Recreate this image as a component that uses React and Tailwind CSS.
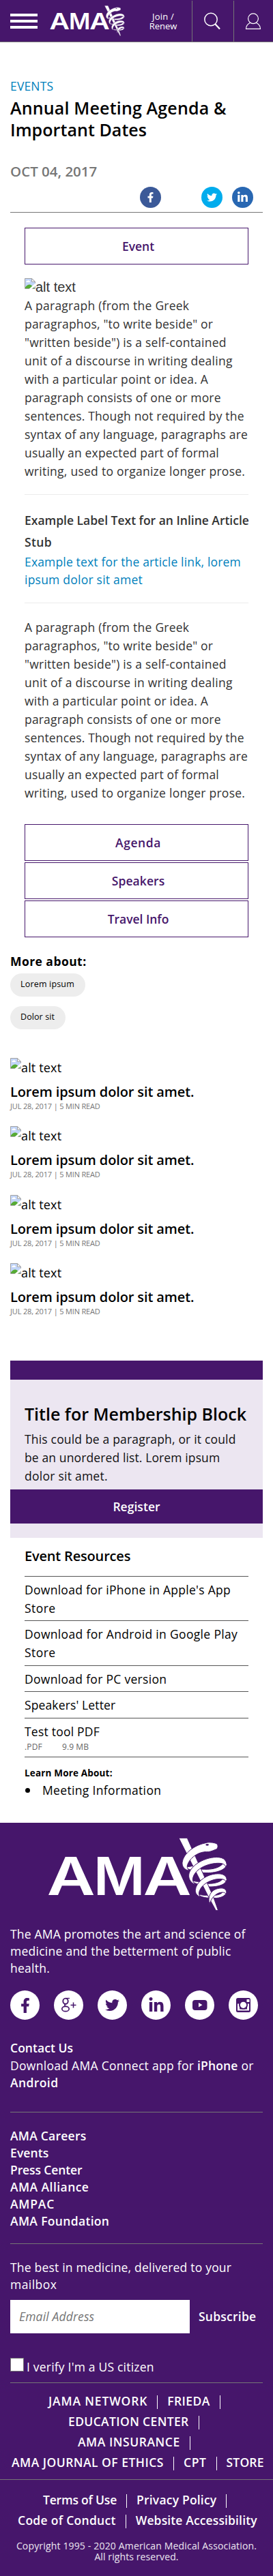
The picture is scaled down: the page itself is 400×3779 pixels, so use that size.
import { FaFacebookF, FaTwitter, FaLinkedinIn } from "react-icons/fa";

function AmaLogo({ className }) {
  return (
    <svg className={className} viewBox="210 78 790 324" fill="#fff">
      <g fontFamily="Inter, sans-serif" fontWeight="600" fontSize="233">
        <text x="206" y="329" textLength="212" lengthAdjust="spacingAndGlyphs">A</text>
        <text x="411" y="329" textLength="226" lengthAdjust="spacingAndGlyphs">M</text>
        <text x="629" y="329" textLength="212" lengthAdjust="spacingAndGlyphs">A</text>
      </g>
      <g stroke="#46166b" strokeWidth="3">
        <path d="M812 204 C825 207 838 205 850 201 L858 220 C840 222 820 216 812 204Z" />
        <path d="M997 196 C992 222 940 238 886 231 L882 216 C925 220 962 213 980 192Z" />
        <path d="M838 262 C855 272 870 272 884 270 L890 284 C865 284 845 275 838 262Z" />
        <path d="M997 262 C992 287 950 297 908 293 L902 279 C935 282 968 275 978 260Z" />
        <path d="M868 325 C885 332 905 332 922 330 L926 343 C900 343 878 338 868 325Z" />
        <path d="M996 318 C990 338 960 347 930 343 L938 331 C955 332 972 327 980 316Z" />
        <path d="M786 79 L823 79 L938 338 L959 398 L949 398 L918 341Z" />
        <path d="M954 105 C940 98 915 96 900 102 C858 110 806 145 801 188 C800 205 812 220 832 223 C822 212 822 205 824 198 C832 172 862 144 900 140 C925 142 938 133 952 128 C959 122 959 112 954 105Z" />
        <path d="M997 196 C994 163 960 160 928 166 C885 174 833 205 830 243 C829 262 842 279 858 283 C846 270 846 262 848 254 C856 224 890 200 935 192 C968 187 990 190 993 209Z" />
        <path d="M997 262 C994 236 965 233 935 239 C900 246 862 275 859 308 C858 322 866 333 880 338 C872 326 874 318 877 312 C886 286 915 268 948 261 C974 257 990 260 993 272Z" />
        <path d="M996 318 C994 298 972 296 950 304 C925 312 912 340 921 371 C926 350 940 330 962 321 C980 316 990 318 993 326Z" />
      </g>
      <ellipse cx="911" cy="109" rx="7" ry="4" fill="#46166b" />
    </svg>
  );
}

function BrokenImage() {
  return (
    <svg className="h-4 w-4 shrink-0" viewBox="0 0 16 16">
      <path d="M.5 .5H11L15.5 5V15.5H.5Z" fill="#c2d5f8" />
      <path d="M2.5 6a1.6 1.6 0 0 1 1.5-2 2 2 0 0 1 3.500 .5A1.200 1.200 0 0 1 8 6Z" fill="#fff" />
      <path d="M1 15V13.500C4 9 8 8.500 10.500 11L15 15Z" fill="#56ab34" />
      <path d="M.5 15.500V.5H10.500L15.500 5.200V15.500Z" fill="none" stroke="#a3a3a3" />
      <path d="M10.500 .8V5.300H15.200Z" fill="#fff" stroke="#a3a3a3" />
      <path d="M16 7.200L6.500 16H10.500L16 11.500Z" fill="#fff" />
    </svg>
  );
}

function Lines({ rows }) {
  return rows.map(([text, tracking], i) => (
    <span key={i} className={`block whitespace-nowrap ${tracking}`}>{text}</span>
  ));
}

const greek = [
  ["A paragraph (from the Greek", "tracking-[0.24px]"],
  ['paragraphos, "to write beside" or', "tracking-[0.18px]"],
  ['"written beside") is a self-contained', "tracking-[0.23px]"],
  ["unit of a discourse in writing dealing", "tracking-[0.27px]"],
  ["with a particular point or idea. A", "tracking-[0.23px]"],
  ["paragraph consists of one or more", "tracking-[0.17px]"],
  ["sentences. Though not required by the", "tracking-[0.16px]"],
  ["syntax of any language, paragraphs are", "tracking-[0.18px]"],
  ["usually an expected part of formal", "tracking-[0.17px]"],
  ["writing, used to organize longer prose.", "tracking-[0.26px]"],
];

function OutlineButton({ children, tracking }) {
  return (
    <button className={`block h-[54px] w-full border border-[#46166b] bg-white pl-[5px] text-center font-semibold text-[#46166b] ${tracking}`}>
      <span className="block h-[52px] leading-[53px]">{children}</span>
    </button>
  );
}

function Article() {
  return (
    <article className="h-[100.33px]">
      <div className="flex h-7 items-start">
        <BrokenImage />
        <span className="text-[18px] leading-7 tracking-[0.16px]">alt text</span>
      </div>
      <h3 className="mt-[9px] text-[20px] leading-[26px] font-semibold tracking-[-0.12px]">Lorem ipsum dolor sit amet.</h3>
      <p className="text-[11px] leading-[15px] tracking-[-0.17px] text-[#767676]">JUL 28, 2017 | 5 MIN READ</p>
    </article>
  );
}

const Bar = () => <span className="mx-[14px] mt-[7px] h-5 w-px shrink-0 bg-white" />;

function LinkRow({ items, className, trailing }) {
  return (
    <div className={`flex h-[30px] leading-[30px] font-semibold whitespace-nowrap ${className}`}>
      {items.map(([label, cls], i) => (
        <span key={label} className="flex">
          <a className={cls}>{label}</a>
          {(i < items.length - 1 || trailing) && <Bar />}
        </span>
      ))}
    </div>
  );
}

function Social({ children }) {
  return <a className="flex h-[43px] w-[43px] items-center justify-center rounded-full bg-white text-[#46166b]">{children}</a>;
}

const careers = [
  ["AMA Careers", "tracking-[0.24px]"],
  ["Events", "tracking-[0.12px]"],
  ["Press Center", "tracking-[-0.12px]"],
  ["AMA Alliance", "tracking-[0.44px]"],
  ["AMPAC", "tracking-[0.78px]"],
  ["AMA Foundation", "tracking-[0.33px]"],
];

export default function App() {
  return (
    <div className="w-[400px] overflow-hidden bg-white font-['Open_Sans',sans-serif] text-[17.5px] text-black">
      <header className="flex h-[62px] border-b border-[#757575] bg-[#46166b] text-white">
        <div className="mt-5 ml-[15px] flex w-10 flex-col gap-[5px]">
          <span className="h-1 bg-white" />
          <span className="h-1 bg-white" />
          <span className="h-1 bg-white" />
        </div>
        <AmaLogo className="mt-2 ml-[18px] h-[45px] w-[110px]" />
        <a className="mt-[17px] ml-[29px] block w-[54px] text-center text-[13px] leading-[14px]">
          <span className="block tracking-[0.2px]">Join /</span>
          <span className="block">Renew</span>
        </a>
        <div className="mt-px ml-[15px] w-[61px] border-l border-[#757575]">
          <svg className="h-[60px] w-[60px]" viewBox="282 1 60 60" fill="none" stroke="#fff">
            <circle cx="309" cy="28.500" r="9.200" strokeWidth="1.500" />
            <path d="M315.500 35.500L322 42.500" strokeWidth="2.200" />
          </svg>
        </div>
        <div className="mt-px w-[58px] border-l border-[#757575]">
          <svg className="h-[60px] w-[57px]" viewBox="343 1 57 60" fill="none" stroke="#fff" strokeWidth="1.200">
            <circle cx="371" cy="27.300" r="7.400" />
            <path d="M366.500 33.500C362.500 35.500 360.500 39 360.500 42.400H381.500C381.500 39 379.500 35.500 375.500 33.500" />
          </svg>
        </div>
      </header>

      <main>
        <div className="px-[15px]">
          <p className="mt-[52px] leading-6 tracking-[0.16px] text-[#007fbc]">EVENTS</p>
          <h1 className="mt-1 text-[25px] leading-8 font-semibold">
            <Lines rows={[["Annual Meeting Agenda &", "tracking-[0.17px]"], ["Important Dates", "tracking-[0.07px]"]]} />
          </h1>
          <p className="mt-[31px] text-[20.5px] leading-7 font-semibold text-[#767676]">OCT 04, 2017</p>
          <div className="mt-[9px] flex h-[31px] justify-end pr-[14px] text-white">
            <a className="flex h-[31px] w-[31px] items-center justify-center rounded-full bg-[#3b5998]"><FaFacebookF size={15} /></a>
            <a className="ml-[59px] flex h-[31px] w-[31px] items-center justify-center rounded-full bg-[#00aced]"><FaTwitter size={15} /></a>
            <a className="ml-[14px] flex h-[31px] w-[31px] items-center justify-center rounded-full bg-[#2867b2]"><FaLinkedinIn size={17} /></a>
          </div>
          <div className="mt-[6px] h-px bg-[#757575]" />
        </div>

        <div className="px-9 text-[#333]">
          <div className="pt-[22px]"><OutlineButton tracking="tracking-normal">Event</OutlineButton></div>
          <div className="mt-5 flex h-[27px] items-start font-['Liberation_Sans',sans-serif] text-[20px] leading-[26px]">
            <BrokenImage />
            <span>alt text</span>
          </div>
          <p className="leading-[27px]"><Lines rows={greek} /></p>
          <div className="mt-5 h-px bg-[#ebebeb]" />
          <h4 className="mt-[21px] leading-8 font-semibold">
            <Lines rows={[["Example Label Text for an Inline Article", "tracking-[-0.01px]"], ["Stub", "tracking-[0.36px]"]]} />
          </h4>
          <a className="block leading-[26px] text-[#007fbc]">
            <Lines rows={[["Example text for the article link, lorem", "tracking-[0.16px]"], ["ipsum dolor sit amet", "tracking-[0.23px]"]]} />
          </a>
          <div className="mt-[21px] h-px bg-[#ebebeb]" />
          <p className="mt-[22px] leading-[27px]"><Lines rows={greek} /></p>
          <div className="mt-8 flex flex-col gap-[2px]">
            <OutlineButton tracking="tracking-[0.58px]">Agenda</OutlineButton>
            <OutlineButton tracking="tracking-[0.08px]">Speakers</OutlineButton>
            <OutlineButton tracking="tracking-[-0.02px]">Travel Info</OutlineButton>
          </div>
        </div>

        <section className="px-[15px]">
          <h4 className="mt-[22px] leading-[27px] font-bold tracking-[0.44px]">More about:</h4>
          <div className="mt-1 flex flex-col items-start gap-[14px] text-[12.5px] leading-[31px]">
            <a className="h-[34px] w-[110px] rounded-full bg-[#ededed] pl-[15px] tracking-[0.18px]">Lorem ipsum</a>
            <a className="h-[34px] w-[81px] rounded-full bg-[#ededed] pl-[15px] tracking-[0.09px]">Dolor sit</a>
          </div>
          <div className="mt-[42px] h-[401px]">
            <Article />
            <Article />
            <Article />
            <Article />
          </div>

          <div className="mt-[43px] h-7 bg-[#46166b]" />
          <div className="bg-[#ece6f1] pb-[21px]">
            <div className="h-[161px] px-[21px] pt-[34px]">
              <h2 className="text-[25px] leading-8 font-semibold whitespace-nowrap">Title for Membership Block</h2>
              <p className="mt-2 leading-[27px] text-[#111]">
                <Lines rows={[["This could be a paragraph, or it could", "tracking-[0.18px]"], ["be an unordered list. Lorem ipsum", "tracking-[0.12px]"], ["dolor sit amet.", "tracking-[0.25px]"]]} />
              </p>
            </div>
            <button className="block h-[50px] w-full bg-[#46166b] text-center leading-[50px] font-semibold tracking-[0.04px] text-white">Register</button>
          </div>
        </section>

        <section className="px-9">
          <h3 className="mt-[14px] text-[20px] leading-[26px] font-semibold tracking-[-0.18px]">Event Resources</h3>
          <ul className="mt-4 border-t border-[#555] leading-[27px]">
            <li className="border-b border-[#555] pt-[6px] pb-1">
              <Lines rows={[["Download for iPhone in Apple's App", "tracking-[0.28px]"], ["Store", "tracking-[0.43px]"]]} />
            </li>
            <li className="border-b border-[#555] pt-[6px] pb-[5px]">
              <Lines rows={[["Download for Android in Google Play", "tracking-[0.33px]"], ["Store", "tracking-[0.43px]"]]} />
            </li>
            <li className="border-b border-[#555] pt-[6px] pb-1 tracking-[0.3px]">Download for PC version</li>
            <li className="border-b border-[#555] pt-[6px] pb-[5px] tracking-[0.13px]">Speakers' Letter</li>
            <li className="border-b border-[#555] pt-[6px] pb-[6px]">
              <span className="block tracking-[0.22px]">Test tool PDF</span>
              <span className="flex text-[12px] leading-[17px] text-[#666]">
                <span className="w-[55px] tracking-[0.18px]">.PDF</span>
                <span className="tracking-[0.08px]">9.9 MB</span>
              </span>
            </li>
          </ul>
          <h5 className="mt-[14px] text-[13.5px] leading-[18px] font-bold tracking-[0.17px]">Learn More About:</h5>
          <div className="mt-[3px] flex items-center leading-[27px]">
            <span className="ml-px h-[7px] w-[7px] rounded-full bg-black" />
            <span className="ml-[18px] tracking-[0.34px]">Meeting Information</span>
          </div>
        </section>
      </main>

      <footer className="mt-[34px] bg-[#46166b] pb-5 text-white">
        <div className="px-[15px]">
          <div className="h-[151px] pt-[22px] pl-[55px]">
            <AmaLogo className="h-[108px] w-[263.3px]" />
          </div>
          <p className="leading-[25px]">
            <Lines rows={[["The AMA promotes the art and science of", "tracking-[0.2px]"], ["medicine and the betterment of public", "tracking-[0.26px]"], ["health.", "tracking-[0.25px]"]]} />
          </p>
          <div className="mt-5 flex gap-[21px]">
            <Social><FaFacebookF size={22} /></Social>
            <Social>
              <svg className="h-[43px] w-[43px]" viewBox="0 0 43 43" fill="none" stroke="#46166b">
                <ellipse cx="17" cy="15.700" rx="3.700" ry="4.100" strokeWidth="1.900" />
                <path d="M17.500 11.500H23" strokeWidth="1.300" />
                <path d="M17.500 19.600C14.800 21 15.500 22.600 17.500 23.600" strokeWidth="1.700" />
                <ellipse cx="17" cy="27" rx="5.200" ry="3.700" strokeWidth="1.700" />
                <path d="M24.500 21.500H32.500M28.500 17.500V25.500" strokeWidth="1.500" />
              </svg>
            </Social>
            <Social><FaTwitter size={21} /></Social>
            <Social><FaLinkedinIn size={24} /></Social>
            <Social>
              <svg className="h-[43px] w-[43px]" viewBox="0 0 43 43">
                <rect x="11" y="14" width="21.500" height="15" rx="4" fill="#46166b" />
                <path d="M20 18V24.500L25.500 21.300Z" fill="#fff" />
              </svg>
            </Social>
            <Social>
              <svg className="h-[43px] w-[43px]" viewBox="0 0 43 43">
                <rect x="11" y="11" width="21" height="21" rx="2.500" fill="#46166b" />
                <path d="M13 19.500H16V29.500H13ZM27 19.500H30V29.500H27ZM13 27.500H30V29.500H13Z" fill="#fff" />
                <rect x="26.500" y="13" width="4" height="4" rx=".5" fill="#fff" />
                <circle cx="21.500" cy="21.300" r="6.500" fill="#46166b" />
                <circle cx="21.500" cy="21.300" r="4.600" fill="#fff" />
              </svg>
            </Social>
          </div>
          <p className="mt-[29px] leading-[25px] font-semibold tracking-[0.04px]">Contact Us</p>
          <p className="mt-px leading-[25px]">
            <span className="block whitespace-nowrap tracking-[0.29px]">Download AMA Connect app for <b className="font-semibold tracking-[0.14px]">iPhone</b> or</span>
            <b className="block font-semibold tracking-[0.41px]">Android</b>
          </p>
          <div className="mt-[30px] h-px bg-[#757575]" />
          <div className="mt-[22px] leading-[25px] font-semibold"><Lines rows={careers} /></div>
          <div className="mt-5 h-px bg-[#757575]" />
          <p className="mt-[22px] leading-[25px]">
            <Lines rows={[["The best in medicine, delivered to your", "tracking-[0.2px]"], ["mailbox", "tracking-[0.45px]"]]} />
          </p>
          <div className="mt-[10px] flex h-[49px] leading-[49px]">
            <div className="w-[263px] bg-white pl-[13px] tracking-[0.15px] text-[#757575] italic">Email Address</div>
            <button className="ml-[13px] font-semibold tracking-[0.23px]">Subscribe</button>
          </div>
          <label className="mt-9 flex h-[26px] items-start">
            <span className="h-5 w-5 border border-[#757575] bg-white" />
            <span className="ml-1 leading-[26px] tracking-[0.2px]">I verify I'm a US citizen</span>
          </label>
          <div className="mt-[10px] h-px bg-[#757575]" />
        </div>
        <div className="mt-[11px]">
          <LinkRow className="pl-[71px]" trailing items={[["JAMA NETWORK", "tracking-[0.85px]"], ["FRIEDA", "tracking-[0.4px]"]]} />
          <LinkRow className="pl-[100px]" trailing items={[["EDUCATION CENTER", "tracking-[0.36px]"]]} />
          <LinkRow className="pl-[114px]" trailing items={[["AMA INSURANCE", "tracking-[0.53px]"]]} />
          <LinkRow className="pl-[17px]" items={[["AMA JOURNAL OF ETHICS", "tracking-[0.48px]"], ["CPT", "tracking-[0.64px]"], ["STORE", "tracking-[0.15px]"]]} />
        </div>
        <div className="mt-[10px] h-px bg-[#757575]" />
        <div className="mt-[14px]">
          <LinkRow className="pl-[63px]" trailing items={[["Terms of Use", "tracking-[-0.2px]"], ["Privacy Policy", "tracking-[0.2px]"]]} />
          <LinkRow className="pl-[26px]" items={[["Code of Conduct", "tracking-[0.29px]"], ["Website Accessibility", "tracking-[0.13px]"]]} />
        </div>
        <p className="mt-[15px] text-center text-[14px] leading-4 text-white/90">
          <Lines rows={[["Copyright 1995 - 2020 American Medical Association.", "tracking-[0.16px]"], ["All rights reserved.", "tracking-[0.1px]"]]} />
        </p>
      </footer>
    </div>
  );
}
